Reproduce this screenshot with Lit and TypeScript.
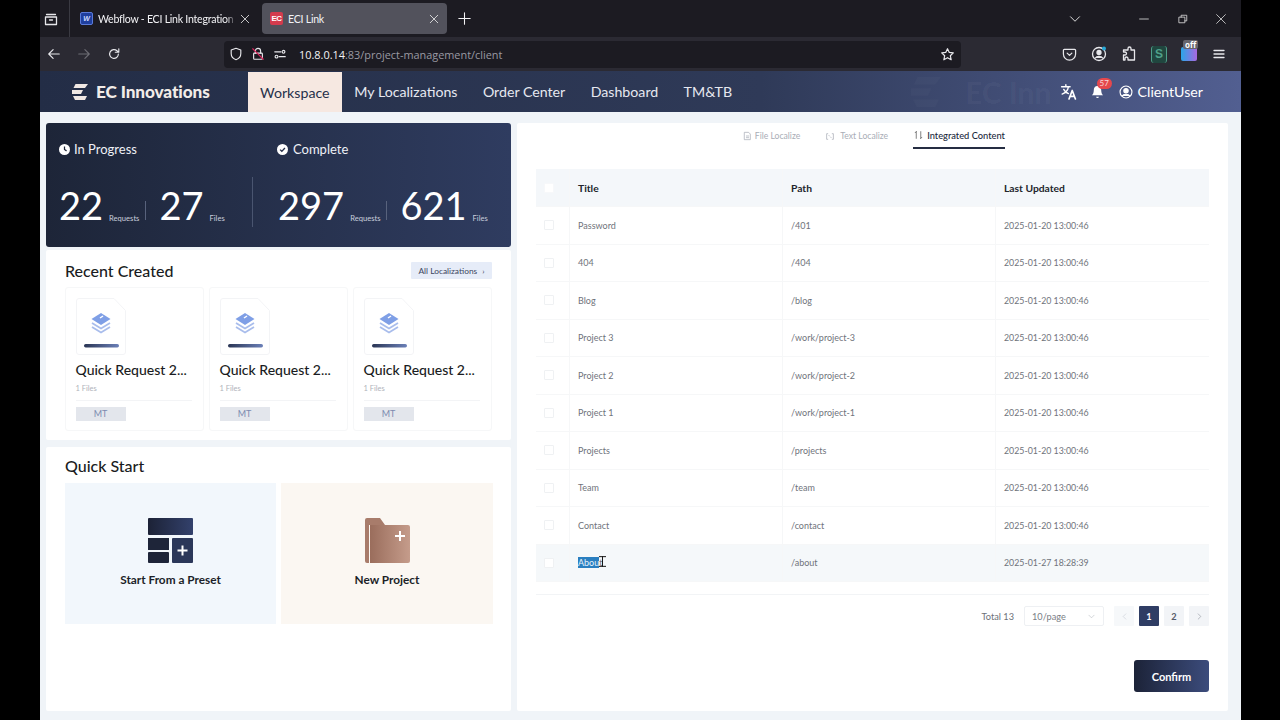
import { LitElement, html, css, svg } from "lit";
import { customElement } from "lit/decorators.js";

const rows = [
  ["Password", "/401", "2025-01-20 13:00:46"],
  ["404", "/404", "2025-01-20 13:00:46"],
  ["Blog", "/blog", "2025-01-20 13:00:46"],
  ["Project 3", "/work/project-3", "2025-01-20 13:00:46"],
  ["Project 2", "/work/project-2", "2025-01-20 13:00:46"],
  ["Project 1", "/work/project-1", "2025-01-20 13:00:46"],
  ["Projects", "/projects", "2025-01-20 13:00:46"],
  ["Team", "/team", "2025-01-20 13:00:46"],
  ["Contact", "/contact", "2025-01-20 13:00:46"],
  ["About", "/about", "2025-01-27 18:28:39"],
];

const ic = (w: number, h: number, body: unknown, vb = "0 0 16 16") =>
  html`<svg width=${w} height=${h} viewBox=${vb} fill="none" stroke="currentColor" stroke-width="1.3" stroke-linecap="round" stroke-linejoin="round">${body}</svg>`;

@customElement("app-root")
export class AppRoot extends LitElement {
  static styles = css`
    :host { display: block; width: 1280px; height: 720px; background: #000; overflow: hidden; font-family: Lato, "Liberation Sans", sans-serif; }
    .stage { width: 1201px; height: 720px; margin-left: 40px; display: flex; flex-direction: column; background: #f0f4f8; }
    .tabs { height: 37px; background: #1c1b22; display: flex; align-items: center; color: #f2f2f5; font: 10.6px Lato, sans-serif; letter-spacing: -0.25px; flex: none; }
    .view { width: 22px; display: flex; justify-content: center; margin-right: 7px; color: #e6e6ea; }
    .sep { width: 1px; height: 37px; background: #3a3a42; }
    .tab { display: flex; align-items: center; height: 31px; border-radius: 4px; white-space: nowrap; overflow: hidden; }
    .t1 { width: 171px; margin-left: 10px; }
    .t2 { width: 185px; margin-left: 11px; background: #52525c; padding: 0 8px; box-sizing: border-box; }
    .t1 .name { width: 138px; overflow: hidden; margin-left: 5px; -webkit-mask-image: linear-gradient(90deg,#000 93%,transparent); mask-image: linear-gradient(90deg,#000 93%,transparent); }
    .t2 .name { flex: 1; margin-left: 5px; }
    .wlogo { width: 13px; height: 13px; flex: none; background: #1f3f9e; border: 1px solid #5b7bd8; border-radius: 2px; box-sizing: border-box; font: italic bold 7px/11px "Liberation Sans", sans-serif; color: #cfdcff; text-align: center; }
    .elogo { width: 13px; height: 13px; flex: none; background: #d33b4d; border-radius: 2px; color: #fff; font: bold 8px/13px "Liberation Sans", sans-serif; text-align: center; letter-spacing: -0.5px; }
    .x { color: #eee; margin-left: 4px; display: flex; flex: none; }
    .plus { margin-left: 11px; display: flex; }
    .spring { flex: 1; }
    .winctl { display: flex; align-items: center; color: #ddd; }
    .tools { height: 34px; background: #2b2a33; display: flex; align-items: center; color: #e8e8ec; flex: none; position: relative; }
    .nav { display: flex; gap: 16px; margin-left: 7px; width: 177px; align-items: center; }
    .url { width: 737px; height: 27px; background: #1c1b22; border-radius: 4px; display: flex; align-items: center; padding-left: 5px; box-sizing: border-box; }
    .url .txt { font: 10.9px "Open Sans", sans-serif; color: #f4f4f6; margin-left: 12px; flex: 1; }
    .url .txt span { color: #9a9aa3; }
    .url .gi { display: flex; margin-right: 8px; }
    .exts { display: flex; align-items: center; gap: 14px; margin-left: 101px; position: relative; }
    .exts > * { flex: none; }
    .sx { width: 16px; height: 17px; color: #4fa08a; font: bold 12px/17px "Liberation Sans", sans-serif; text-align: center; border-left: 1px solid #4fa08a; border-right: 1px solid #4fa08a; border-radius: 3px; background: #20463f; box-sizing: border-box; }
    .offb { width: 16px; height: 14px; position: relative; background: linear-gradient(90deg,#2aa6e8,#a868e0); border-radius: 2px; }
    .offb span { position: absolute; left: 2px; top: -7px; background: #66656d; color: #fff; font: bold 8px/9px "Open Sans", sans-serif; padding: 0 2px; border-radius: 2px; }
    .hdr { height: 41px; flex: none; background: linear-gradient(90deg,#232d46,#2f3a58 60%,#525f91); display: flex; align-items: stretch; position: relative; overflow: hidden; color: #eef0f6; }
    .logo { display: flex; align-items: center; margin-left: 32px; width: 176px; color: #f0e8e4; flex: none; }
    .logo b { font-size: 17.2px; font-weight: 900; margin-left: 8px; letter-spacing: -0.1px; color: #f2ece8; white-space: nowrap; }
    .ni { display: flex; align-items: center; font-size: 14.2px; padding: 0 12.7px; color: #e6e8f0; white-space: nowrap; }
    .ni.on { background: #f6e8e1; color: #26304a; padding: 0 12px; margin-top: 1px; }
    .ghost { position: absolute; left: 925px; top: 3px; font-size: 30px; font-weight: 900; color: rgba(255,255,255,.035); white-space: nowrap; }
    .ghosti { position: absolute; left: 870px; top: 6px; color: rgba(255,255,255,.025); }
    .hright { margin-left: auto; display: flex; align-items: center; margin-right: 38px; color: #fff; position: relative; }
    .bell { margin-left: 14px; position: relative; display: flex; }
    .badge { position: absolute; left: 6px; top: -7px; background: #e5484d; border-radius: 7px; font-size: 8px; line-height: 11px; padding: 0 3px; color: #f8d9da; }
    .user { font-size: 14.2px; margin-left: 5px; }
    .main { flex: 1; display: flex; padding: 11px 13px 9px 6px; gap: 6px; min-height: 0; }
    .left { width: 465px; display: flex; flex-direction: column; gap: 3px; flex: none; }
    .stats { height: 124px; flex: none; background: linear-gradient(90deg,#1d2538,#2f3c60); border-radius: 3px; color: #fff; display: grid; grid-template-columns: 219px 1fr; box-sizing: border-box; padding: 0 0 0 13px; position: relative; }
    .sc { padding-top: 17px; }
    .sh { display: flex; align-items: center; gap: 4px; font-size: 13px; line-height: 18px; color: #eef0f6; white-space: nowrap; }
    .sc + .divider + .sc .sh { gap: 5px; margin-left: -1px; }
    .nums { display: flex; align-items: flex-end; margin-top: 25px; height: 42px; }
    .n { font-size: 38px; font-weight: 400; line-height: 40px; color: #fff; }
    .u { font-size: 7.6px; color: #c9cfdd; margin-left: 6px; line-height: 13px; }
    .vb { width: 1px; height: 19px; background: #58627c; margin: 0 13px 5px 6px; }
    .divider { position: absolute; left: 206px; top: 54px; width: 1px; height: 50px; background: #4a5570; }
    .card { background: #fff; border-radius: 2px; box-sizing: border-box; }
    .recent { height: 190px; flex: none; padding: 0 19px; }
    .rhead { display: flex; justify-content: space-between; align-items: center; height: 37px; padding-top: 5px; padding-bottom: 1px; box-sizing: border-box; }
    h2 { margin: 0; font-size: 16px; font-weight: 500; color: #1a1c22; }
    .all { background: #e6ecf8; font-size: 8.4px; color: #3c4660; width: 81px; height: 17px; display: flex; align-items: center; justify-content: center; gap: 5px; border-radius: 1px; }
    .cards { display: grid; grid-template-columns: repeat(3, 139px); gap: 5px; }
    .rc { height: 144px; border: 1px solid #f6f7f8; border-radius: 3px; padding: 10px 9.5px; box-sizing: border-box; }
    .thumb { display: block; }
    .rt { font-size: 14px; font-weight: 500; color: #1a1c22; margin-top: 5px; white-space: nowrap; line-height: 20px; }
    .rf { font-size: 7.5px; color: #b0b3ba; margin-top: 4px; line-height: 10px; padding-bottom: 6px; border-bottom: 1px solid #f3f4f6; width: 116px; }
    .mt { width: 50px; height: 14px; background: #e3e6ec; color: #7d8bb0; font-size: 9px; line-height: 14px; text-align: center; margin-top: 6px; }
    .quick { flex: 1; padding: 0 19px; margin-top: 4px; }
    .qh { height: 36px; display: flex; align-items: center; box-sizing: border-box; }
    .qg { display: grid; grid-template-columns: 211px 212px; gap: 5px; }
    .qc { height: 141px; display: flex; flex-direction: column; align-items: center; padding-top: 35px; box-sizing: border-box; font-size: 11.8px; font-weight: 700; color: #1c1f28; }
    .qc span { margin-top: 9px; }
    .qa { background: #f2f7fc; }
    .qb { background: #fbf7f2; }
    .right { flex: 1; background: #fff; border-radius: 2px; padding: 0 19px; display: flex; flex-direction: column; }
    .rtabs { height: 46px; flex: none; display: flex; justify-content: flex-end; padding-right: 204px; gap: 25px; font-size: 8.6px; color: #a9adb6; }
    .rt2 { height: 26px; display: flex; align-items: center; gap: 3px; white-space: nowrap; box-sizing: border-box; }
    .rt2.t { gap: 5px; }
    .rt2.on { color: #20283c; font-weight: 500; font-size: 9.3px; gap: 4px; border-bottom: 2px solid #252d42; padding: 0 0 0 1px; }
    .tbl { display: grid; grid-template-columns: 34px 213px 213px 1fr; font-size: 9px; color: #6f737b; }
    .cell { height: 37.5px; display: flex; align-items: center; padding-left: 8px; box-sizing: border-box; border-bottom: 1px solid #f6f7f8; border-right: 1px solid #f6f7f8; }
    .cell.last { border-right: 0; font-size: 8.8px; }
    .cell.hd { height: 38px; background: #f4f7fa; color: #22252c; font-weight: 700; font-size: 10.3px; }
    .cell.hv { background: #f5f8fa; }
    .cb { width: 8px; height: 8px; border: 1px solid #eff1f3; background: #fff; border-radius: 1px; }
    .hd .cb { border-color: #f7f8fa; }
    .sel { position: relative; }
    .sel i { font-style: normal; background: #2a7fc0; color: #e7f3fc; }
    .caret { position: absolute; left: 20px; top: -3px; color: #111; display: flex; }
    .tend { height: 12px; flex: none; border-bottom: 1px solid #f2f4f6; }
    .pg { display: flex; align-items: center; justify-content: flex-end; margin-top: 11px; height: 20px; font-size: 9.2px; color: #6c7078; flex: none; }
    .size { width: 80px; height: 20px; border: 1px solid #eef0f3; border-radius: 2px; margin-left: 10px; margin-right: 5px; display: flex; align-items: center; justify-content: space-between; padding: 0 8px 0 7px; box-sizing: border-box; color: #7a7e86; }
    .pb { width: 20px; height: 20px; background: #f2f4f7; margin-left: 5px; display: flex; align-items: center; justify-content: center; font-weight: 700; border-radius: 1px; color: #555b68; }
    .pb.on { background: #2f3d64; color: #fff; }
    .pb.off { color: #c6cad2; background: #f6f8fa; }
    .cf { margin-top: 34px; align-self: flex-end; width: 75px; height: 32px; border-radius: 3px; background: linear-gradient(90deg,#1c2338,#3c4c7c); color: #fff; font-size: 11px; font-weight: 700; display: flex; align-items: center; justify-content: center; }
  `;

  render() {
    const logoPath = svg`<path d="M3.500 0H16l-3 4H1.500zM0 6h11l-2 4H0zM1 12h14l-2 4H3z"/>`;
    return html`<div class="stage">
      <div class="tabs">
        <div class="view">${ic(16, 16, svg`<path d="M3.500 3.500h9M2.500 6h11v7.500h-11zM6.500 9h3"/>`)}</div>
        <div class="sep"></div>
        <div class="tab t1"><div class="wlogo">W</div><div class="name">Webflow - ECI Link Integration S</div>
          <span class="x">${ic(10, 10, svg`<path d="M2 2l12 12M14 2L2 14"/>`)}</span></div>
        <div class="tab t2"><div class="elogo">EC</div><div class="name">ECI Link</div>
          <span class="x">${ic(10, 10, svg`<path d="M2 2l12 12M14 2L2 14"/>`)}</span></div>
        <span class="plus">${ic(13, 13, svg`<path d="M8 1v14M1 8h14"/>`)}</span>
        <div class="spring"></div>
        <div class="winctl">
          ${ic(12, 12, svg`<path d="M2 5l6 6 6-6"/>`)}
          <span style="width:58px"></span>
          ${ic(10, 10, svg`<path d="M1 8h14"/>`)}
          <span style="width:29px"></span>
          ${ic(10, 10, svg`<path d="M2 5h9v9H2zM5 5V2h9v9h-3"/>`)}
          <span style="width:28px"></span>
          ${ic(10, 10, svg`<path d="M1 1l14 14M15 1L1 15"/>`)}
          <span style="width:15px"></span>
        </div>
      </div>
      <div class="tools">
        <div class="nav">
          ${ic(14, 14, svg`<path d="M14 8H2M7 3L2 8l5 5"/>`)}
          <span style="color:#6d6c74;display:flex">${ic(14, 14, svg`<path d="M2 8h12M9 3l5 5-5 5"/>`)}</span>
          ${ic(14, 14, svg`<path d="M13 8a5 5 0 1 1-1.600-3.700L13.500 6M13.500 2v4h-4"/>`)}
        </div>
        <div class="url">
          <span class="gi">${ic(14, 14, svg`<path d="M8 1.500l5.500 2v4c0 3.500-2.500 6-5.500 7-3-1-5.500-3.500-5.500-7v-4z"/>`)}</span>
          <span class="gi">${ic(14, 14, svg`<rect x="3" y="7" width="10" height="7" rx="1"/><path d="M5 7V4.500a3 3 0 0 1 6 0V7"/><path d="M2 2l12 12" stroke="#e0245e"/>`)}</span>
          <span class="gi" style="margin-right:0">${ic(14, 14, svg`<circle cx="4" cy="11" r="1.600"/><path d="M7 11h7M2 5.500h7"/><circle cx="12" cy="5.500" r="1.600"/>`)}</span>
          <span class="txt">10.8.0.14<span>:83/project-management/client</span></span>
          <span class="gi" style="margin-right:6px">${ic(15, 15, svg`<path d="M8 1.800l1.900 4 4.300.5-3.200 3 .9 4.300L8 11.400l-3.900 2.200.9-4.300-3.200-3 4.300-.5z"/>`)}</span>
        </div>
        <div class="exts">
          ${ic(15, 15, svg`<path d="M2.500 2.500h11a1 1 0 0 1 1 1v4a6.500 6.500 0 0 1-13 0v-4a1 1 0 0 1 1-1zM5.500 6.500L8 9l2.500-2.500"/>`)}
          ${ic(16, 16, svg`<circle cx="8" cy="8" r="6.500"/><circle cx="8" cy="6.500" r="2" fill="currentColor"/><path d="M4.500 12c1-2 6-2 7 0" fill="currentColor"/><circle cx="13" cy="2.500" r="2" fill="#27a9d8" stroke="none"/>`)}
          ${ic(16, 16, svg`<path d="M7 2.500a1.500 1.500 0 0 1 3 0V4h3.500v10H7v-1.500a1.500 1.500 0 0 0-3 0V14H2.500V9H4a1.500 1.500 0 0 0 0-3H2.500V4H7z"/>`)}
          <div class="sx">S</div>
          <div class="offb"><span>off</span></div>
          ${ic(16, 16, svg`<path d="M3 4.500h10M3 8h10M3 11.500h10"/>`)}
        </div>
      </div>
      <div class="hdr">
        <div class="logo">
          <svg width="16" height="16" viewBox="0 0 16 16" fill="currentColor">${logoPath}</svg>
          <b>EC Innovations</b>
        </div>
        <div class="ni on">Workspace</div>
        <div class="ni">My Localizations</div>
        <div class="ni">Order Center</div>
        <div class="ni">Dashboard</div>
        <div class="ni">TM&amp;TB</div>
        <svg class="ghosti" width="32" height="30" viewBox="0 0 16 16" fill="currentColor">${logoPath}</svg>
        <div class="ghost">EC Inn</div>
        <div class="hright">
          ${ic(17, 17, svg`<path d="M1.500 3.500h8M5.500 1.500v2M8 3.500c-.5 3-3 6-6 7M3.500 6c1 2 3 3.500 4.500 4"/><path d="M8.500 15l3-8 3 8M9.700 12.500h3.600" stroke-width="1.600"/>`)}
          <span class="bell">
            <svg width="13" height="14" viewBox="0 0 14 15" fill="#fff"><path d="M7 1c2.800 0 4 2 4 4.500 0 3 1 4.500 2 5.500H1c1-1 2-2.500 2-5.500C3 3 4.200 1 7 1zM5.500 12.500h3a1.500 1.500 0 0 1-3 0z"/></svg>
            <span class="badge">57</span>
          </span>
          <span style="margin-left:15px;display:flex">${ic(14, 14, svg`<circle cx="8" cy="8" r="6.800"/><circle cx="8" cy="6.500" r="2.500" fill="currentColor"/><path d="M3.800 12.500c1-2.500 7.400-2.500 8.400 0" fill="currentColor"/>`)}</span>
          <span class="user">ClientUser</span>
        </div>
      </div>
      <div class="main">
        <div class="left">
          <div class="stats">
            <div class="sc">
              <div class="sh"><svg width="11" height="11" viewBox="0 0 16 16"><circle cx="8" cy="8" r="8" fill="#fff"/><path d="M8 3.500V8l3 2" stroke="#1f2739" stroke-width="1.800" fill="none"/></svg>In Progress</div>
              <div class="nums"><span class="n">22</span><span class="u">Requests</span><span class="vb"></span><span class="n">27</span><span class="u">Files</span></div>
            </div>
            <div class="divider"></div>
            <div class="sc">
              <div class="sh"><svg width="11" height="11" viewBox="0 0 16 16"><circle cx="8" cy="8" r="8" fill="#fff"/><path d="M4.500 8.200l2.500 2.500 4.500-5" stroke="#27304a" stroke-width="2" fill="none"/></svg>Complete</div>
              <div class="nums"><span class="n">297</span><span class="u">Requests</span><span class="vb"></span><span class="n">621</span><span class="u">Files</span></div>
            </div>
          </div>
          <div class="card recent">
            <div class="rhead"><h2>Recent Created</h2><div class="all">All Localizations <span>›</span></div></div>
            <div class="cards">
              ${[0, 1, 2].map(() => html`<div class="rc">
                <svg class="thumb" width="50" height="57" viewBox="0 0 50 57">
                  <path d="M3 .5h35l11.500 12V54a2.500 2.500 0 0 1-2.500 2.500H3A2.500 2.500 0 0 1 .5 54V3A2.500 2.500 0 0 1 3 .5z" fill="#fff" stroke="#f3f4f6"/>
                  <path d="M25 15l9.500 6-9.500 6-9.500-6z" fill="#7f9fe6"/><path d="M24 20l3-2" stroke="#fff" stroke-width="1.500"/>
                  <path d="M16 25l9 5.500 9-5.500M16 29l9 5.500 9-5.500" stroke="#a9bdec" stroke-width="1.800" fill="none"/>
                  <defs><linearGradient id="bar"><stop offset="0" stop-color="#2a3554"/><stop offset="1" stop-color="#6b80b8"/></linearGradient></defs>
                  <rect x="8" y="46" width="35" height="3.500" rx="1.700" fill="url(#bar)"/>
                </svg>
                <div class="rt">Quick Request 2...</div>
                <div class="rf">1 Files</div>
                <div class="mt">MT</div>
              </div>`)}
            </div>
          </div>
          <div class="card quick">
            <div class="qh"><h2>Quick Start</h2></div>
            <div class="qg">
              <div class="qc qa">
                <svg width="45" height="45" viewBox="0 0 45 45">
                  <defs><linearGradient id="g1"><stop offset="0" stop-color="#1c2236"/><stop offset="1" stop-color="#33416c"/></linearGradient></defs>
                  <rect width="45" height="17" rx="1" fill="url(#g1)"/>
                  <rect y="20" width="21" height="12" fill="#1e2539"/>
                  <rect y="34" width="21" height="11" rx="1" fill="#1e2539"/>
                  <rect x="24" y="20" width="21" height="25" rx="1" fill="#2b3759"/>
                  <path d="M34.500 27.500v10M29.500 32.500h10" stroke="#fff" stroke-width="2"/>
                </svg>
                <span>Start From a Preset</span>
              </div>
              <div class="qc qb">
                <svg width="45" height="45" viewBox="0 0 45 45">
                  <defs><linearGradient id="g2"><stop offset="0" stop-color="#9a6d5c"/><stop offset="1" stop-color="#c59c8b"/></linearGradient></defs>
                  <path d="M2 0h13l5 7H4v38H2a2 2 0 0 1-2-2V2a2 2 0 0 1 2-2z" fill="#a87c6b"/>
                  <path d="M5 7h38a2 2 0 0 1 2 2v34a2 2 0 0 1-2 2H5z" fill="url(#g2)"/>
                  <path d="M35 13v10M30 18h10" stroke="#fff" stroke-width="2"/>
                </svg>
                <span>New Project</span>
              </div>
            </div>
          </div>
        </div>
        <div class="right">
          <div class="rtabs">
            <div class="rt2">${ic(9, 10, svg`<path d="M3 1.500h7l3 3v10H3zM6 8h4M6 11h4"/>`)}File Localize</div>
            <div class="rt2 t">${ic(10, 9, svg`<path d="M4 3H2v10h2M12 3h2v10h-2M6 6l1 1M9 9l1 1"/>`)}Text Localize</div>
            <div class="rt2 on">${ic(9, 10, svg`<path d="M4 14V2M2 4l2-2M12 2v12M14 12l-2 2" stroke="#555"/>`)}Integrated Content</div>
          </div>
          <div class="tbl">
            <div class="cell hd"><div class="cb"></div></div>
            <div class="cell hd">Title</div>
            <div class="cell hd">Path</div>
            <div class="cell hd last">Last Updated</div>
            ${rows.map((r, i) => {
              const hv = i === 9 ? "hv" : "";
              return html`
                <div class="cell ${hv}"><div class="cb"></div></div>
                <div class="cell ${hv}">${i === 9
                  ? html`<span class="sel"><i>Abou</i>t<span class="caret">${ic(9, 15, svg`<path d="M2 1h9M6.500 1v14M2 15h9" stroke="#111" stroke-width="1.400"/>`, "0 0 13 16")}</span></span>`
                  : r[0]}</div>
                <div class="cell ${hv}">${r[1]}</div>
                <div class="cell last ${hv}">${r[2]}</div>`;
            })}
          </div>
          <div class="tend"></div>
          <div class="pg">
            <span>Total 13</span>
            <div class="size"><span>10/page</span>${ic(7, 7, svg`<path d="M2 5l6 6 6-6" stroke="#b5b9c0"/>`)}</div>
            <div class="pb off">${ic(7, 7, svg`<path d="M11 2L5 8l6 6"/>`)}</div>
            <div class="pb on">1</div>
            <div class="pb">2</div>
            <div class="pb">${ic(7, 7, svg`<path d="M5 2l6 6-6 6" stroke="#8a8f9a"/>`)}</div>
          </div>
          <div class="cf">Confirm</div>
        </div>
      </div>
    </div>`;
  }
}
